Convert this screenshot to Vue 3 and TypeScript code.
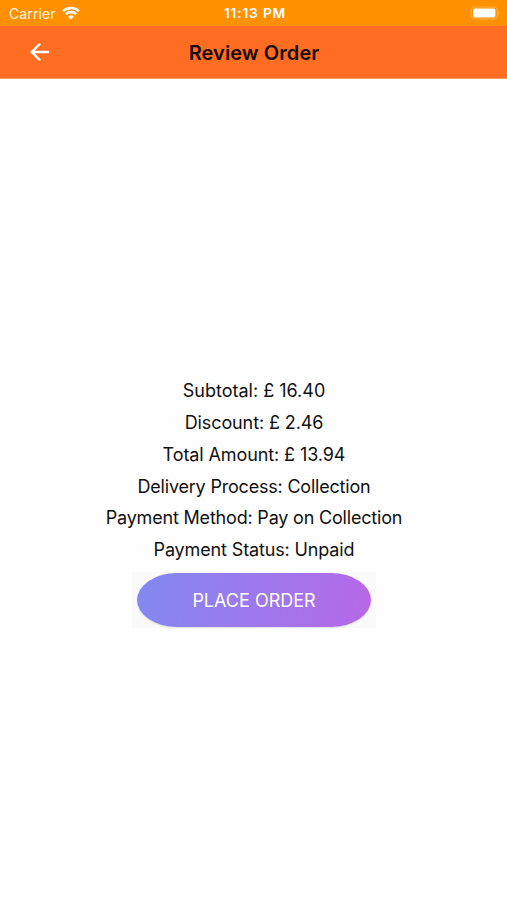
<script setup lang="ts">
interface Row {
  label: string
  value: string
  tracking: number
}

const rows: Row[] = [
  { label: 'Subtotal', value: '£ 16.40', tracking: 0 },
  { label: 'Discount', value: '£ 2.46', tracking: -0.11 },
  { label: 'Total Amount', value: '£ 13.94', tracking: -0.1 },
  { label: 'Delivery Process', value: 'Collection', tracking: -0.2 },
  { label: 'Payment Method', value: 'Pay on Collection', tracking: -0.19 },
  { label: 'Payment Status', value: 'Unpaid', tracking: -0.14 },
]
</script>

<template>
  <div class="screen">
    <div class="status">
      <div class="carrier">
        <span>Carrier</span>
        <svg class="wifi" width="18" height="14" viewBox="0 0 18 14">
          <path d="M1 5.2a11.6 11.6 0 0 1 16 0M3.8 8.1a7.5 7.5 0 0 1 10.4 0" fill="none" stroke="#fff" stroke-width="2.4" />
          <path d="M9 13.6L6.1 10.7a4.2 4.2 0 0 1 5.8 0z" fill="#fff" />
        </svg>
      </div>
      <span class="time">11:13 PM</span>
      <svg class="battery" width="31" height="14" viewBox="0 0 31 14">
        <rect x="1" y="1" width="26.5" height="12" rx="3.8" fill="none" stroke="#ffb14a" stroke-width="1.2" />
        <rect x="3" y="2.6" width="22.4" height="8.8" rx="2" fill="#fff" />
        <path d="M28.7 5q2 2 0 4z" fill="#ffb14a" />
      </svg>
    </div>
    <header class="header">
      <svg class="back" width="20" height="20" viewBox="0 0 20 20">
        <path d="M19.2 10H2M10.2 1.5L1.7 10l8.5 8.5" fill="none" stroke="#fff" stroke-width="2.3" />
      </svg>
      <h1>Review Order</h1>
    </header>
    <main class="content">
      <p
        v-for="row in rows"
        :key="row.label"
        class="row"
        :style="{ letterSpacing: `${row.tracking}px` }"
      >{{ row.label }}: {{ row.value }}</p>
      <div class="button-box">
        <button class="button">PLACE ORDER</button>
      </div>
    </main>
  </div>
</template>

<style>
body {
  margin: 0;
  background: #fff;
}
</style>

<style scoped>
.screen {
  width: 507px;
  height: 900px;
  display: flex;
  flex-direction: column;
  overflow: hidden;
  background: #fefefe;
  font-family: Inter, sans-serif;
  color: #111;
}
.status {
  box-sizing: border-box;
  height: 26px;
  flex: none;
  display: grid;
  grid-template-columns: 1fr auto 1fr;
  align-items: center;
  padding: 0 6px 0 9px;
  background: #ff9100;
  color: #fff;
  font-size: 14px;
}
.carrier {
  display: flex;
  align-items: center;
  gap: 6px;
  color: #fff3df;
  letter-spacing: 0.12px;
}
.time {
  font-weight: 600;
  font-size: 13.7px;
  letter-spacing: 0.85px;
}
.battery {
  justify-self: end;
}
.header {
  box-sizing: border-box;
  height: 53px;
  flex: none;
  display: grid;
  grid-template-columns: 80px 1fr 80px;
  align-items: center;
  background: #ff6d22;
  border-bottom: 1px solid #ff9b68;
}
.back {
  margin-left: 30px;
}
h1 {
  margin: 0;
  padding: 1px 0 0 1px;
  text-align: center;
  font-size: 20px;
  font-weight: 600;
  letter-spacing: 0.08px;
  color: #170800;
}
.content {
  padding-top: 296.3px;
  display: flex;
  flex-direction: column;
  align-items: center;
}
.row {
  margin: 0;
  padding-left: 1px;
  height: 31.8px;
  line-height: 32px;
  font-size: 18px;
  white-space: nowrap;
}
.button-box {
  box-sizing: border-box;
  width: 244px;
  height: 56px;
  margin-top: 6px;
  padding: 0.5px 5px;
  background: #fafafa;
}
.button {
  display: block;
  width: 234px;
  height: 54px;
  padding: 1px 0 0 1px;
  border: 0;
  border-radius: 40px / 27px;
  background: linear-gradient(100deg, #8289f1, #b768e7);
  box-shadow: 0 1px 2px rgba(0, 0, 0, 0.12);
  color: #fff;
  font: 400 18px Inter, sans-serif;
}
</style>
